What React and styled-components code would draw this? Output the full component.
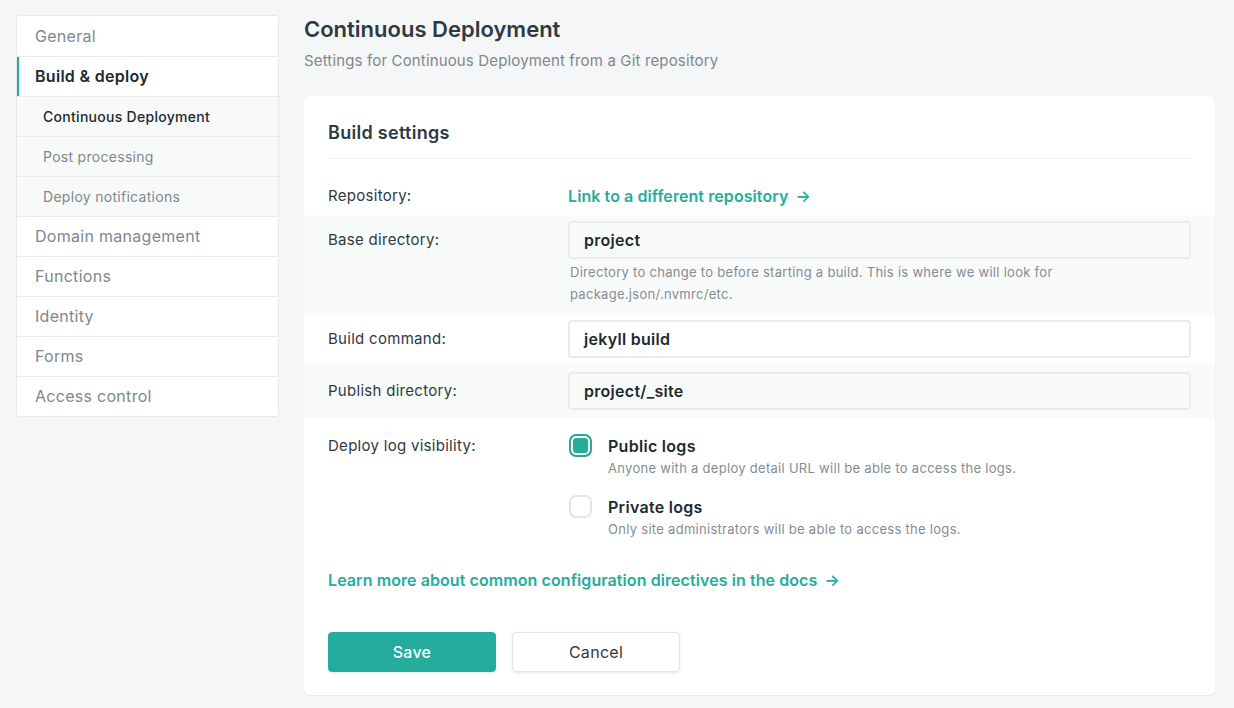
import styled, { createGlobalStyle } from 'styled-components';

const GlobalStyle = createGlobalStyle`
  * { box-sizing: border-box; }
  body {
    margin: 0;
    background: #f4f6f7;
    font-family: Inter, "Noto Sans", sans-serif;
    color: #2e3a40;
    letter-spacing: 0.018em;
    -webkit-font-smoothing: antialiased;
  }
`;

const teal = '#25ac9d';

const Page = styled.div`
  display: flex;
  align-items: flex-start;
  gap: 25px;
  padding: 15px 19px 12px 16px;
`;

const Sidebar = styled.nav`
  width: 263px;
  flex-shrink: 0;
  background: #fff;
  border: 1px solid #e6e9ea;
  border-radius: 4px;
  overflow: hidden;
`;

const NavItem = styled.div`
  height: 40px;
  display: flex;
  align-items: center;
  padding-left: ${p => (p.sub ? '26px' : '18px')};
  padding-bottom: ${p => (p.first ? '0' : '1px')};
  border-top: ${p => (p.first ? 'none' : '1px solid #e9ebec')};
  box-shadow: ${p => (p.active ? `inset 2px 0 0 ${teal}` : 'none')};
  background: ${p => (p.sub ? '#f8f9f9' : '#fff')};
  font-size: ${p => (p.sub ? '14px' : '16px')};
  font-weight: ${p => (p.active ? 600 : p.current ? 500 : 400)};
  color: ${p => (p.active || p.current ? '#1d2a30' : '#7f878b')};
`;

const Main = styled.main`
  flex: 1;
  min-width: 0;
`;

const Title = styled.h1`
  margin: 0;
  font-size: 22px;
  line-height: 28px;
  font-weight: 600;
  letter-spacing: 0;
  color: #2e3a40;
`;

const Subtitle = styled.p`
  margin: 4px 0 0;
  font-size: 15px;
  line-height: 28px;
  letter-spacing: 0.01em;
  color: #7f878b;
`;

const Card = styled.section`
  margin-top: 21px;
  background: #fff;
  border-radius: 6px;
  box-shadow: 0 1px 2px rgba(0, 0, 0, 0.06);
  padding: 25px 0 23px;
`;

const CardHead = styled.h2`
  margin: 0 24px 19px;
  padding-bottom: 13px;
  border-bottom: 1px solid #eceeef;
  font-size: 18px;
  line-height: 24px;
  font-weight: 600;
  color: #2e3a40;
`;

const Row = styled.div`
  display: grid;
  grid-template-columns: 240px 1fr;
  padding: ${p => p.pad || '6px'} 24px ${p => p.padBottom || p.pad || '6px'};
  background: ${p => (p.shaded ? '#f9fafa' : '#fff')};
`;

const Label = styled.div`
  font-size: 15px;
  line-height: ${p => p.lh || '38px'};
  color: #2e3a40;
`;

const Input = styled.div`
  height: 38px;
  display: flex;
  align-items: center;
  padding: 0 14px;
  border: 2px solid #e9ebec;
  border-radius: 4px;
  background: ${p => (p.shaded ? '#f9fafa' : '#fff')};
  font-size: 16px;
  font-weight: 600;
  color: #1d2a30;
`;

const Help = styled.p`
  margin: 2px 0 0 2px;
  font-size: 13px;
  line-height: 22px;
  color: #858d91;
  max-width: 500px;
`;

const Link = styled.a`
  font-size: 16px;
  line-height: ${p => p.lh || '24px'};
  font-weight: 600;
  letter-spacing: 0.005em;
  color: ${teal};
  text-decoration: none;
  span { margin-left: 7px; }
`;

const Options = styled.div`
  display: flex;
  flex-direction: column;
  gap: 17px;
`;

const Option = styled.div`
  display: grid;
  grid-template-columns: 22px 1fr;
  column-gap: 17px;
  margin-left: 1px;
`;

const Check = styled.div`
  width: 23px;
  height: 23px;
  margin-top: -1px;
  border-radius: 7px;
  border: 2px solid ${p => (p.checked ? teal : '#e2e5e6')};
  background: ${p => (p.checked ? teal : '#fff')};
  box-shadow: ${p => (p.checked ? 'inset 0 0 0 2px #fff' : 'none')};
`;

const OptionTitle = styled.div`
  font-size: 16px;
  line-height: 22px;
  font-weight: 600;
  color: #1d2a30;
`;

const OptionDesc = styled.div`
  font-size: 13px;
  line-height: 22px;
  color: #858d91;
`;

const Footer = styled.div`
  padding: 29px 24px 0;
`;

const Buttons = styled.div`
  display: flex;
  gap: 16px;
  margin-top: 41px;
`;

const Button = styled.button`
  width: 168px;
  height: 40px;
  border-radius: 4px;
  font-family: inherit;
  letter-spacing: inherit;
  font-size: 16px;
  font-weight: ${p => (p.primary ? 500 : 400)};
  color: ${p => (p.primary ? '#fff' : '#2e3a40')};
  background: ${p => (p.primary ? teal : '#fff')};
  border: 1px solid ${p => (p.primary ? teal : '#e3e6e7')};
  box-shadow: 0 1px 3px rgba(0, 0, 0, 0.1);
`;

const nav = [
  { label: 'General', first: true },
  { label: 'Build & deploy', active: true },
  { label: 'Continuous Deployment', sub: true, current: true },
  { label: 'Post processing', sub: true },
  { label: 'Deploy notifications', sub: true },
  { label: 'Domain management' },
  { label: 'Functions' },
  { label: 'Identity' },
  { label: 'Forms' },
  { label: 'Access control' },
];

export default function App() {
  return (
    <>
      <GlobalStyle />
      <Page>
        <Sidebar>
          {nav.map(item => (
            <NavItem key={item.label} {...item}>
              {item.label}
            </NavItem>
          ))}
        </Sidebar>
        <Main>
          <Title>Continuous Deployment</Title>
          <Subtitle>Settings for Continuous Deployment from a Git repository</Subtitle>
          <Card>
            <CardHead>Build settings</CardHead>
            <Row pad="6px" padBottom="7px">
              <Label lh="24px">Repository:</Label>
              <div>
                <Link href="#" lh="24px">
                  Link to a different repository<span>→</span>
                </Link>
              </div>
            </Row>
            <Row shaded pad="6px" padBottom="10px">
              <Label>Base directory:</Label>
              <div>
                <Input shaded>project</Input>
                <Help>
                  Directory to change to before starting a build. This is where we will look for
                  package.json/.nvmrc/etc.
                </Help>
              </div>
            </Row>
            <Row pad="5px">
              <Label>Build command:</Label>
              <Input>jekyll build</Input>
            </Row>
            <Row shaded pad="9px" padBottom="8px">
              <Label>Publish directory:</Label>
              <Input shaded>project/_site</Input>
            </Row>
            <Row pad="17px" padBottom="0">
              <Label lh="22px">Deploy log visibility:</Label>
              <Options>
                <Option>
                  <Check checked />
                  <div>
                    <OptionTitle>Public logs</OptionTitle>
                    <OptionDesc>Anyone with a deploy detail URL will be able to access the logs.</OptionDesc>
                  </div>
                </Option>
                <Option>
                  <Check />
                  <div>
                    <OptionTitle>Private logs</OptionTitle>
                    <OptionDesc>Only site administrators will be able to access the logs.</OptionDesc>
                  </div>
                </Option>
              </Options>
            </Row>
            <Footer>
              <Link href="#" lh="22px">
                Learn more about common configuration directives in the docs<span>→</span>
              </Link>
              <Buttons>
                <Button primary>Save</Button>
                <Button>Cancel</Button>
              </Buttons>
            </Footer>
          </Card>
        </Main>
      </Page>
    </>
  );
}
